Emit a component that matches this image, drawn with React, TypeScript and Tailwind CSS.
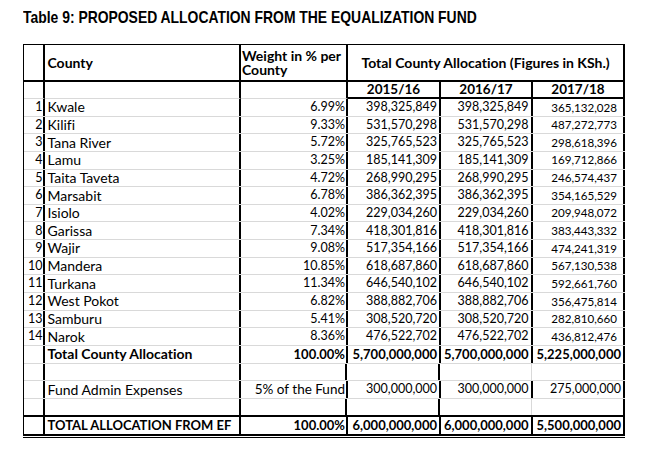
import React from "react";

type Row = [string, string, string, string, string, string];

const data: Row[] = [
  ["1", "Kwale", "6.99%", "398,325,849", "398,325,849", "365,132,028"],
  ["2", "Kilifi", "9.33%", "531,570,298", "531,570,298", "487,272,773"],
  ["3", "Tana River", "5.72%", "325,765,523", "325,765,523", "298,618,396"],
  ["4", "Lamu", "3.25%", "185,141,309", "185,141,309", "169,712,866"],
  ["5", "Taita Taveta", "4.72%", "268,990,295", "268,990,295", "246,574,437"],
  ["6", "Marsabit", "6.78%", "386,362,395", "386,362,395", "354,165,529"],
  ["7", "Isiolo", "4.02%", "229,034,260", "229,034,260", "209,948,072"],
  ["8", "Garissa", "7.34%", "418,301,816", "418,301,816", "383,443,332"],
  ["9", "Wajir", "9.08%", "517,354,166", "517,354,166", "474,241,319"],
  ["10", "Mandera", "10.85%", "618,687,860", "618,687,860", "567,130,538"],
  ["11", "Turkana", "11.34%", "646,540,102", "646,540,102", "592,661,760"],
  ["12", "West Pokot", "6.82%", "388,882,706", "388,882,706", "356,475,814"],
  ["13", "Samburu", "5.41%", "308,520,720", "308,520,720", "282,810,660"],
  ["14", "Narok", "8.36%", "476,522,702", "476,522,702", "436,812,476"],
];

function DataRow({
  r,
  bold = false,
  small = false,
  gapL5 = false,
  thickBottom = false,
  pctText = false,
}: {
  r: Row;
  bold?: boolean;
  small?: boolean;
  gapL5?: boolean;
  thickBottom?: boolean;
  pctText?: boolean;
}) {
  const bb = thickBottom ? "border-b-2 border-b-black" : "border-b border-b-[#d9d9d9]";
  const fw = bold ? "font-bold text-[13px]" : "font-normal text-[12.5px]";
  return (
    <div className={`flex h-[17.65px] ${bb}`}>
      <div className="w-[21px] h-full border-r-2 border-black flex items-center justify-end pr-[0.5px] text-[12.5px]">
        {r[0]}
      </div>
      <div
        className={`w-[196px] h-full border-r-2 border-black flex items-center pl-[2.5px] whitespace-nowrap text-[14px] ${
          bold ? "font-bold" : ""
        }`}
      >
        {r[1]}
      </div>
      <div
        className={`w-[107px] h-full border-r-2 border-black flex items-center justify-end pr-[1px] whitespace-nowrap ${
          pctText ? "text-[13.5px]" : fw
        }`}
      >
        {r[2]}
      </div>
      <div className={`w-[93px] h-full border-r-2 border-black flex items-center justify-end pr-[2px] ${fw}`}>{r[3]}</div>
      <div
        className={`h-full flex items-center justify-end pr-[2.5px] ${fw} ${
          gapL5 ? "w-[92px] border-r border-r-[#d9d9d9] mr-px" : "w-[92px] border-r-2 border-black"
        }`}
      >
        {r[4]}
      </div>
      <div
        className={`w-[92px] h-full border-r-2 border-black flex items-center justify-end ${
          small ? "pr-[6px] text-[11.6px]" : `pr-[2px] ${fw}`
        }`}
      >
        {r[5]}
      </div>
    </div>
  );
}

export default function App() {
  return (
    <div className="w-[652px] h-[459px] bg-white text-black overflow-hidden">
      <div className="h-[44px] pl-[23px] pt-[8px]">
        <div
          className="origin-left scale-x-[0.818] whitespace-nowrap text-[17px] font-bold leading-[20px]"
          style={{ fontFamily: '"Liberation Sans Narrow", "Liberation Sans", sans-serif' }}
        >
          Table 9: PROPOSED ALLOCATION FROM THE EQUALIZATION FUND
        </div>
      </div>
      <div
        className="ml-[23px] w-[602px] border-l border-t border-black leading-none [font-variant-ligatures:none]"
        style={{ fontFamily: "Lato, 'Noto Sans', sans-serif" }}
      >
        {/* Header */}
        <div className="flex h-[37px] border-b-2 border-black">
          <div className="w-[21px] h-full border-r-2 border-black" />
          <div className="w-[196px] h-full border-r-2 border-black flex items-center pl-[2.5px] text-[14px] font-bold">
            County
          </div>
          <div className="w-[107px] h-full border-r-2 border-black flex items-center pl-[1px] text-[14px] font-bold leading-[14px]">
            <div className="flex flex-col">
              <span className="whitespace-nowrap">Weight in % per</span>
              <span>County</span>
            </div>
          </div>
          <div className="w-[277px] h-full border-r-2 border-black flex items-center justify-center text-[14px] font-bold">
            Total County Allocation (Figures in KSh.)
          </div>
        </div>
        {/* Years */}
        <div className="flex h-[17px] text-[13.5px] font-bold">
          <div className="w-[21px] h-full border-r-2 border-black border-b border-b-[#d9d9d9]" />
          <div className="w-[196px] h-full border-r-2 border-black border-b border-b-[#d9d9d9]" />
          <div className="w-[107px] h-full border-r-2 border-black border-b border-b-[#d9d9d9]" />
          <div className="w-[93px] h-full border-r-2 border-black border-b-2 border-b-black flex items-center justify-center">
            2015/16
          </div>
          <div className="w-[92px] h-full border-r-2 border-black border-b-2 border-b-black flex items-center justify-center">
            2016/17
          </div>
          <div className="w-[92px] h-full border-r-2 border-black border-b-2 border-b-black flex items-center justify-center">
            2017/18
          </div>
        </div>
        {data.map((r) => (
          <DataRow key={r[0]} r={r} small />
        ))}
        <DataRow r={["", "Total County Allocation", "100.00%", "5,700,000,000", "5,700,000,000", "5,225,000,000"]} bold />
        <DataRow r={["", "", "", "", "", ""]} gapL5 />
        <DataRow
          r={["", "Fund Admin Expenses", "5% of the Fund", "300,000,000", "300,000,000", "275,000,000"]}
          pctText
        />
        <DataRow r={["", "", "", "", "", ""]} gapL5 thickBottom />
        <div className="flex h-[19px] border-b-2 border-black">
          <div className="w-[21px] h-full border-r-2 border-black" />
          <div className="w-[196px] h-full border-r-2 border-black flex items-center pl-[2.5px] whitespace-nowrap text-[13px] font-bold">
            TOTAL ALLOCATION FROM EF
          </div>
          <div className="w-[107px] h-full border-r-2 border-black flex items-center justify-end pr-[1px] text-[13px] font-bold">
            100.00%
          </div>
          <div className="w-[93px] h-full border-r-2 border-black flex items-center justify-end pr-[2px] text-[13px] font-bold">
            6,000,000,000
          </div>
          <div className="w-[92px] h-full border-r-2 border-black flex items-center justify-end pr-[2.5px] text-[13px] font-bold">
            6,000,000,000
          </div>
          <div className="w-[92px] h-full border-r-2 border-black flex items-center justify-end pr-[2px] text-[13px] font-bold">
            5,500,000,000
          </div>
        </div>
      </div>
      <div className="ml-[23px] mt-px w-[602px] h-px bg-black" />
    </div>
  );
}
